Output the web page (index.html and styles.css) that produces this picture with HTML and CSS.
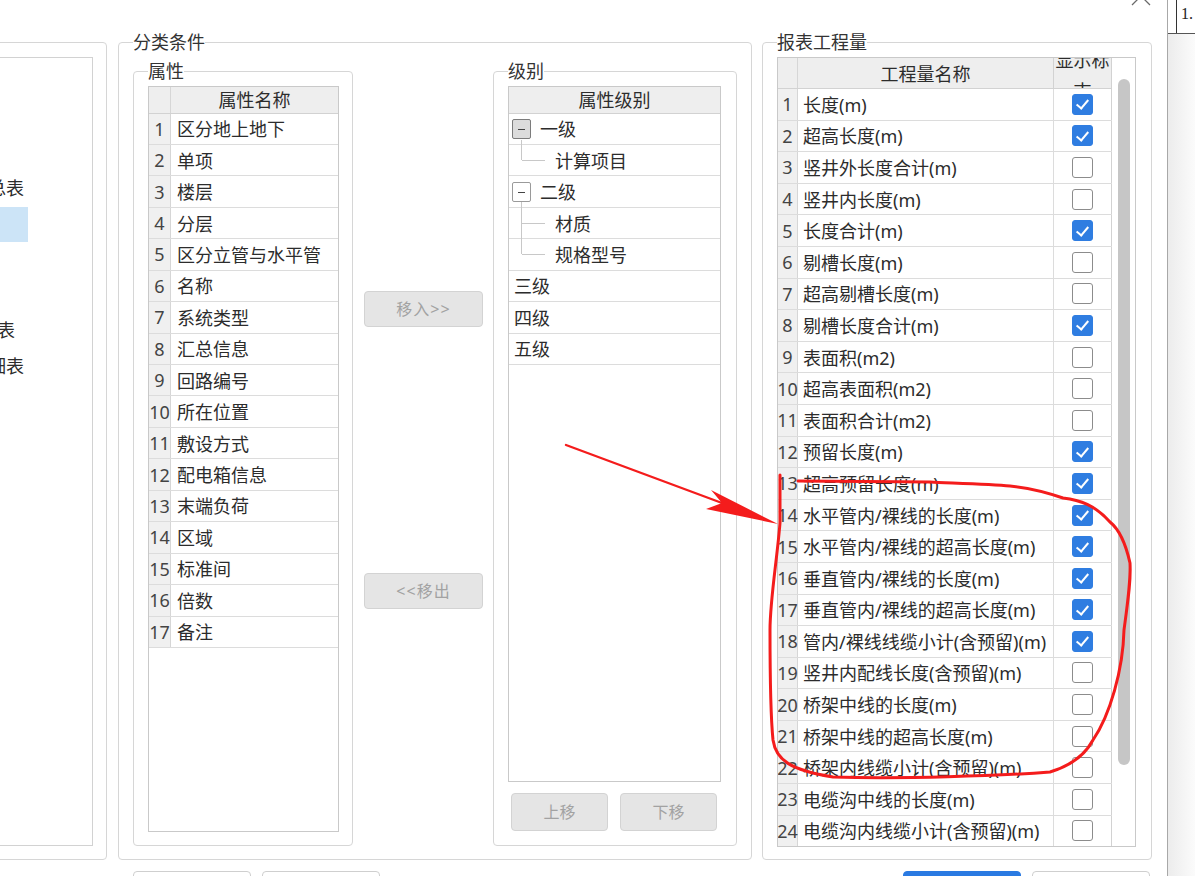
FILE: index.html
```html
<!DOCTYPE html>
<html lang="zh-CN">
<head>
<meta charset="utf-8">
<title>报表设置</title>
<link rel="stylesheet" href="styles.css">
</head>
<body>
<div class="screen">
  <div class="dialog">
    <div class="titlebar">
      <svg class="close" width="20" height="20" viewBox="0 0 20 20"><path d="M1 1 L19 19 M19 1 L1 19"/></svg>
    </div>

    <div class="main">
      <div class="left-panel">
        <div class="left-inner">
          <ul class="report-list">
            <li>工程量汇总表</li>
            <li class="selected">分类汇总</li>
            <li>清单汇总</li>
            <li>定额汇总</li>
            <li class="top">分类工程量表</li>
            <li>工程量明细表</li>
          </ul>
        </div>
      </div>

      <fieldset class="group classify">
        <legend>分类条件</legend>

        <fieldset class="group props">
          <legend>属性</legend>
          <div class="grid-wrap">
            <div class="prop-row head">
              <div class="num"></div>
              <div class="name center">属性名称</div>
            </div>
            <div class="prop-row"><div class="num">1</div><div class="name">区分地上地下</div></div>
            <div class="prop-row"><div class="num">2</div><div class="name">单项</div></div>
            <div class="prop-row"><div class="num">3</div><div class="name">楼层</div></div>
            <div class="prop-row"><div class="num">4</div><div class="name">分层</div></div>
            <div class="prop-row"><div class="num">5</div><div class="name">区分立管与水平管</div></div>
            <div class="prop-row"><div class="num">6</div><div class="name">名称</div></div>
            <div class="prop-row"><div class="num">7</div><div class="name">系统类型</div></div>
            <div class="prop-row"><div class="num">8</div><div class="name">汇总信息</div></div>
            <div class="prop-row"><div class="num">9</div><div class="name">回路编号</div></div>
            <div class="prop-row"><div class="num">10</div><div class="name">所在位置</div></div>
            <div class="prop-row"><div class="num">11</div><div class="name">敷设方式</div></div>
            <div class="prop-row"><div class="num">12</div><div class="name">配电箱信息</div></div>
            <div class="prop-row"><div class="num">13</div><div class="name">末端负荷</div></div>
            <div class="prop-row"><div class="num">14</div><div class="name">区域</div></div>
            <div class="prop-row"><div class="num">15</div><div class="name">标准间</div></div>
            <div class="prop-row"><div class="num">16</div><div class="name">倍数</div></div>
            <div class="prop-row"><div class="num">17</div><div class="name">备注</div></div>
          </div>
        </fieldset>

        <div class="move-col">
          <button class="btn disabled move" disabled>移入&gt;&gt;</button>
          <button class="btn disabled move" disabled>&lt;&lt;移出</button>
        </div>

        <fieldset class="group levels">
          <legend>级别</legend>
          <div class="grid-wrap tree">
            <div class="tree-head">属性级别</div>
            <div class="tree-row parent"><span class="expander focus"></span><span>一级</span></div>
            <div class="tree-row child last">计算项目</div>
            <div class="tree-row parent"><span class="expander"></span><span>二级</span></div>
            <div class="tree-row child">材质</div>
            <div class="tree-row child last">规格型号</div>
            <div class="tree-row">三级</div>
            <div class="tree-row">四级</div>
            <div class="tree-row">五级</div>
          </div>
          <div class="order-btns">
            <button class="btn disabled order" disabled>上移</button>
            <button class="btn disabled order" disabled>下移</button>
          </div>
        </fieldset>
      </fieldset>

      <fieldset class="group report">
        <legend>报表工程量</legend>
        <div class="grid-wrap report-wrap">
          <div class="report-table">
            <div class="rep-row head">
              <div class="num"></div>
              <div class="name center">工程量名称</div>
              <div class="chk head-chk"><div class="wrap-text">显示标志</div></div>
            </div>
            <div class="rep-row"><div class="num">1</div><div class="name">长度(m)</div><div class="chk"><span class="cb on"></span></div></div>
            <div class="rep-row"><div class="num">2</div><div class="name">超高长度(m)</div><div class="chk"><span class="cb on"></span></div></div>
            <div class="rep-row"><div class="num">3</div><div class="name">竖井外长度合计(m)</div><div class="chk"><span class="cb"></span></div></div>
            <div class="rep-row"><div class="num">4</div><div class="name">竖井内长度(m)</div><div class="chk"><span class="cb"></span></div></div>
            <div class="rep-row"><div class="num">5</div><div class="name">长度合计(m)</div><div class="chk"><span class="cb on"></span></div></div>
            <div class="rep-row"><div class="num">6</div><div class="name">剔槽长度(m)</div><div class="chk"><span class="cb"></span></div></div>
            <div class="rep-row"><div class="num">7</div><div class="name">超高剔槽长度(m)</div><div class="chk"><span class="cb"></span></div></div>
            <div class="rep-row"><div class="num">8</div><div class="name">剔槽长度合计(m)</div><div class="chk"><span class="cb on"></span></div></div>
            <div class="rep-row"><div class="num">9</div><div class="name">表面积(m2)</div><div class="chk"><span class="cb"></span></div></div>
            <div class="rep-row"><div class="num">10</div><div class="name">超高表面积(m2)</div><div class="chk"><span class="cb"></span></div></div>
            <div class="rep-row"><div class="num">11</div><div class="name">表面积合计(m2)</div><div class="chk"><span class="cb"></span></div></div>
            <div class="rep-row"><div class="num">12</div><div class="name">预留长度(m)</div><div class="chk"><span class="cb on"></span></div></div>
            <div class="rep-row"><div class="num">13</div><div class="name">超高预留长度(m)</div><div class="chk"><span class="cb on"></span></div></div>
            <div class="rep-row"><div class="num">14</div><div class="name">水平管内/裸线的长度(m)</div><div class="chk"><span class="cb on"></span></div></div>
            <div class="rep-row"><div class="num">15</div><div class="name">水平管内/裸线的超高长度(m)</div><div class="chk"><span class="cb on"></span></div></div>
            <div class="rep-row"><div class="num">16</div><div class="name">垂直管内/裸线的长度(m)</div><div class="chk"><span class="cb on"></span></div></div>
            <div class="rep-row"><div class="num">17</div><div class="name">垂直管内/裸线的超高长度(m)</div><div class="chk"><span class="cb on"></span></div></div>
            <div class="rep-row"><div class="num">18</div><div class="name">管内/裸线线缆小计(含预留)(m)</div><div class="chk"><span class="cb on"></span></div></div>
            <div class="rep-row"><div class="num">19</div><div class="name">竖井内配线长度(含预留)(m)</div><div class="chk"><span class="cb"></span></div></div>
            <div class="rep-row"><div class="num">20</div><div class="name">桥架中线的长度(m)</div><div class="chk"><span class="cb"></span></div></div>
            <div class="rep-row"><div class="num">21</div><div class="name">桥架中线的超高长度(m)</div><div class="chk"><span class="cb"></span></div></div>
            <div class="rep-row"><div class="num">22</div><div class="name">桥架内线缆小计(含预留)(m)</div><div class="chk"><span class="cb"></span></div></div>
            <div class="rep-row"><div class="num">23</div><div class="name">电缆沟中线的长度(m)</div><div class="chk"><span class="cb"></span></div></div>
            <div class="rep-row"><div class="num">24</div><div class="name">电缆沟内线缆小计(含预留)(m)</div><div class="chk"><span class="cb"></span></div></div>
          </div>
          <div class="vscroll"><div class="thumb"></div></div>
        </div>
      </fieldset>
    </div>

    <div class="footer">
      <button class="btn plain">导入</button>
      <button class="btn plain">导出</button>
      <span class="spacer"></span>
      <button class="btn primary">确定</button>
      <button class="btn plain">取消</button>
    </div>
  </div>

  <div class="backdrop">
    <div class="cell-row"><div class="cell">1.</div></div>
  </div>
</div>

<svg class="annotation" width="1195" height="876" viewBox="0 0 1195 876">
  <path class="mark" d="M566 445 L722 503"/>
  <polygon class="mark-fill" points="778,524 711,490 722,503 706,509"/>
  <path class="mark loop" d="M780 475 L780 523 C777 560 770 600 770 630 C770 680 771 720 773 740 C776 760 790 770 833 777 C900 779 1000 776 1050 772 C1070 766 1085 755 1093 740 C1110 715 1123 670 1124 630 C1128 600 1131 580 1130 563 C1126 545 1120 530 1110 522 C1095 505 1080 500 1063 498 C1040 490 1020 487 1010 486 C990 484 950 483 930 482 L798 481"/>
</svg>
</body>
</html>
```

FILE: styles.css
```css
* { box-sizing: border-box; }
html, body { margin: 0; padding: 0; }
body {
  width: 1195px;
  height: 876px;
  overflow: hidden;
  position: relative;
  background: #fff;
  font-family: "Noto Sans", "Noto Sans CJK SC", sans-serif;
  font-size: 18px;
  line-height: 20px;
  color: #2c2c2c;
}

.screen { display: flex; height: 876px; }

.dialog {
  width: 1167px;
  flex: none;
  display: flex;
  flex-direction: column;
  overflow: hidden;
  background: #fff;
}

.titlebar {
  height: 32px;
  flex: none;
  display: flex;
  justify-content: flex-end;
  padding-right: 16px;
}
.close { margin-top: -14px; }
.close path { stroke: #6a6a6a; stroke-width: 1.3; fill: none; }

.main {
  height: 828px;
  flex: none;
  display: flex;
  align-items: stretch;
}

/* left report list panel (mostly off-screen) */
.left-panel {
  width: 207px;
  margin-left: -100px;
  margin-top: 10px;
  flex: none;
  border: 1px solid #d6d6d6;
  border-radius: 4px;
  padding: 14px 13px 13px 0;
  display: flex;
}
.left-inner {
  flex: 1;
  border: 1px solid #d2d2d2;
  overflow: hidden;
}
.report-list {
  list-style: none;
  margin: 0 0 0 5px;
  padding: 113px 0 0;
  width: 121px;
}
.report-list li {
  height: 35.6px;
  line-height: 35.6px;
  padding-left: 9px;
  white-space: nowrap;
}
.report-list li.top { padding-left: 0; }
.report-list li.selected { background: #cce4f7; }

/* group boxes */
.group {
  margin: 0;
  min-width: 0;
  border: 1px solid #d6d6d6;
  border-radius: 4px;
}
.group > legend {
  padding: 0;
  font-size: 18px;
  line-height: 20px;
  color: #333;
}

.classify {
  width: 634px;
  flex: none;
  margin-left: 11px;
  padding: 9px 14px 13px 14px;
  display: flex;
  align-items: stretch;
}

.props {
  width: 220px;
  flex: none;
  padding: 5px 13px 13px 14px;
  display: flex;
  flex-direction: column;
}

.move-col {
  width: 140px;
  flex: none;
  display: flex;
  flex-direction: column;
  align-items: flex-start;
  padding: 230px 0 0 11px;
  gap: 246px;
}

.levels {
  width: 244px;
  flex: none;
  padding: 5px 15px 14px 14px;
  display: flex;
  flex-direction: column;
}

.report {
  width: 390px;
  flex: none;
  margin-left: 10px;
  padding: 5px 15px 12px 14px;
  display: flex;
  flex-direction: column;
}

/* grids */
.grid-wrap {
  flex: 1;
  border: 1px solid #c9c9c9;
  background: #fff;
  overflow: hidden;
  min-height: 0;
}

.prop-row {
  display: grid;
  grid-template-columns: 22px 1fr;
  height: 31.45px;
  border-bottom: 1px solid #dcdcdc;
}
.prop-row.head {
  height: 26.5px;
  background: #eeeeee;
  border-bottom-color: #d2d2d2;
}

.num {
  background: #f0f0f0;
  border-right: 1px solid #d6d6d6;
  display: flex;
  align-items: center;
  justify-content: center;
  color: #444;
  white-space: nowrap;
}
.head .num { background: #eeeeee; }

.name {
  display: flex;
  align-items: center;
  padding-left: 6px;
  padding-top: 1px;
  white-space: nowrap;
  overflow: hidden;
}
.name.center { justify-content: center; padding-left: 0; }

/* level tree */
.tree-head {
  height: 26.5px;
  background: #eeeeee;
  border-bottom: 1px solid #d2d2d2;
  display: flex;
  align-items: center;
  justify-content: center;
}
.tree-row {
  position: relative;
  height: 31.45px;
  border-bottom: 1px solid #dcdcdc;
  display: flex;
  align-items: center;
  padding-left: 5px;
  padding-top: 1px;
  white-space: nowrap;
}
.tree-row.parent { padding-left: 3px; gap: 9px; }
.tree-row.child { padding-left: 46px; }
.expander {
  position: relative;
  width: 19px;
  height: 20px;
  border: 1px solid #9a9a9a;
  border-radius: 2px;
  background: #fff;
  flex: none;
}
.expander.focus { background: #dcdcdc; border-color: #7c7c7c; }
.expander::before {
  content: "";
  position: absolute;
  left: 5px;
  right: 5px;
  top: 8.5px;
  height: 1px;
  background: #444;
}
.tree-row.parent::after {
  content: "";
  position: absolute;
  left: 12px;
  top: 26px;
  bottom: -1px;
  width: 1px;
  background: #c8c8c8;
}
.tree-row.child::before {
  content: "";
  position: absolute;
  left: 12px;
  top: 0;
  bottom: -1px;
  width: 1px;
  background: #c8c8c8;
}
.tree-row.child.last::before { bottom: 50%; }
.tree-row.child::after {
  content: "";
  position: absolute;
  left: 13px;
  width: 23px;
  top: 50%;
  height: 1px;
  background: #c8c8c8;
}

.order-btns {
  flex: none;
  display: flex;
  gap: 12px;
  padding-left: 3px;
  margin-top: 11px;
}

/* buttons */
.btn {
  font-family: "Noto Sans", "Noto Sans CJK SC", sans-serif;
  font-size: 16px;
  line-height: 20px;
  border-radius: 4px;
  padding: 0;
}
.btn.disabled {
  background: #e5e5e5;
  border: 1px solid #d3d3d3;
  color: #a2a2a2;
}
.btn.move { width: 119px; height: 36px; letter-spacing: 1px; }
.btn.order { width: 97px; height: 38px; }

/* report table */
.report-wrap { display: flex; }
.report-table { width: 334px; flex: none; }
.rep-row {
  display: grid;
  grid-template-columns: 20px 256px 58px;
  height: 31.6px;
  border-bottom: 1px solid #dcdcdc;
}
.rep-row.head {
  height: 31px;
  background: #eeeeee;
  border-bottom-color: #d2d2d2;
}
.rep-row .name { padding-left: 5px; border-right: 1px solid #dcdcdc; }
.rep-row.head .name { border-right-color: #d2d2d2; padding-left: 0; }
.chk {
  display: flex;
  align-items: center;
  justify-content: center;
  border-right: 1px solid #d2d2d2;
}
.head-chk {
  align-items: flex-start;
  overflow: hidden;
}
.wrap-text {
  width: 57px;
  margin-top: -13px;
  line-height: 31px;
  text-align: center;
  flex: none;
}
.cb {
  width: 21px;
  height: 21px;
  border: 1px solid #8c8c8c;
  border-radius: 3px;
  background: #fff;
  position: relative;
}
.cb.on {
  background: #2f7de1;
  border-color: #2f7de1;
}
.cb.on::after {
  content: "";
  position: absolute;
  left: 6px;
  top: 2.5px;
  width: 5px;
  height: 10px;
  border-right: 2.2px solid #fff;
  border-bottom: 2.2px solid #fff;
  transform: rotate(40deg);
}

.vscroll {
  flex: 1;
  background: #fff;
  padding: 21px 0 0 6px;
}
.thumb {
  width: 12px;
  height: 686px;
  border-radius: 6px;
  background: #c6c6c6;
}

/* footer */
.footer {
  flex: none;
  display: flex;
  gap: 11px;
  padding: 11px 17px 0 133px;
}
.footer .spacer { flex: 1; }
.btn.plain {
  width: 118px;
  height: 34px;
  background: #fff;
  border: 1px solid #cfcfcf;
  color: #333;
}
.btn.primary {
  width: 118px;
  height: 34px;
  background: #2a7ae2;
  border: 1px solid #2a7ae2;
  color: #fff;
}

/* background application on the right */
.backdrop {
  flex: 1;
  border-left: 1px solid #a8a8a8;
  background: linear-gradient(to right, #ececec, #fbfbfb);
}
.cell-row {
  height: 34px;
  background: #fff;
  border-bottom: 1px solid #555;
  padding-left: 8px;
}
.cell {
  height: 100%;
  border-left: 1px solid #333;
  padding: 4px 0 0 4px;
  font-family: "Liberation Serif", serif;
  font-size: 16px;
  color: #222;
}

/* red hand annotation */
.annotation {
  position: absolute;
  left: 0;
  top: 0;
  pointer-events: none;
}
.mark {
  fill: none;
  stroke: #f41c1c;
  stroke-width: 2.4;
  stroke-linecap: round;
  stroke-linejoin: round;
}
.mark.loop { stroke-width: 3; }
.mark-fill { fill: #f41c1c; }
```
